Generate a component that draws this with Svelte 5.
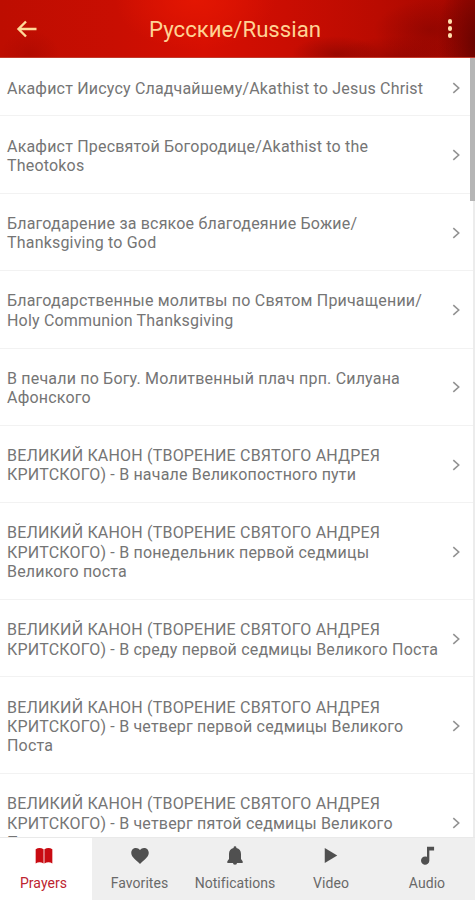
<script>
  const prayers = [
    ['Акафист Иисусу Сладчайшему/Akathist to Jesus Christ'],
    ['Акафист Пресвятой Богородице/Akathist to the', 'Theotokos'],
    ['Благодарение за всякое благодеяние Божие/', 'Thanksgiving to God'],
    ['Благодарственные молитвы по Святом Причащении/', 'Holy Communion Thanksgiving'],
    ['В печали по Богу. Молитвенный плач прп. Силуана', 'Афонского'],
    ['ВЕЛИКИЙ КАНОН (ТВОРЕНИЕ СВЯТОГО АНДРЕЯ', 'КРИТСКОГО) - В начале Великопостного пути'],
    ['ВЕЛИКИЙ КАНОН (ТВОРЕНИЕ СВЯТОГО АНДРЕЯ', 'КРИТСКОГО) - В понедельник первой седмицы', 'Великого поста'],
    ['ВЕЛИКИЙ КАНОН (ТВОРЕНИЕ СВЯТОГО АНДРЕЯ', 'КРИТСКОГО) - В среду первой седмицы Великого Поста'],
    ['ВЕЛИКИЙ КАНОН (ТВОРЕНИЕ СВЯТОГО АНДРЕЯ', 'КРИТСКОГО) - В четверг первой седмицы Великого', 'Поста'],
    ['ВЕЛИКИЙ КАНОН (ТВОРЕНИЕ СВЯТОГО АНДРЕЯ', 'КРИТСКОГО) - В четверг пятой седмицы Великого', 'Поста']
  ];
  const tabs = [
    { label: 'Prayers', d: 'M2 4Q6.5 0.8 11.5 4V21Q6.5 18 2 21ZM12.5 4Q17.5 0.8 22 4V21Q17.5 18 12.5 21Z' },
    { label: 'Favorites', d: 'M12 21.5l-1.45-1.32C5.1 15.5 1.5 12.3 1.5 8.2 1.5 5 4 2.5 7.2 2.5c1.9 0 3.6.9 4.8 2.3 1.2-1.4 2.9-2.3 4.8-2.3 3.2 0 5.7 2.5 5.7 5.7 0 4.1-3.6 7.3-9.05 12z' },
    { label: 'Notifications', d: 'M12 22.5a2.5 2.5 0 0 0 2.5-2.6h-5A2.5 2.5 0 0 0 12 22.5zm7.2-7V9.5c0-3.7-2-6.4-5.5-7.1V2a1.7 1.7 0 0 0-3.4 0v.4c-3.5.7-5.5 3.4-5.5 7.1V15.5L2.8 18.3V20.3h18.4v-2z' },
    { label: 'Video', d: 'M4.5 2.5L19.5 11.5 4.5 20.5z' },
    { label: 'Audio', d: 'M12 1v12a5 5 0 1 0 2.8 4.7V5.5h5.7V1z' }
  ];
</script>

<div class="screen">
  <header>
    <button aria-label="Back">
      <svg width="24" height="24" viewBox="0 0 24 24"><path d="M21.5 12H4M11 4.5L3.5 12l7.5 7.5" /></svg>
    </button>
    <h1>Русские/Russian</h1>
    <button class="more" aria-label="More"><i></i><i></i><i></i></button>
  </header>
  <main>
    {#each prayers as lines}
      <div class="row">
        <div class="name">
          {#each lines as line}<span>{line}</span>{/each}
        </div>
        <svg width="9" height="12" viewBox="0 0 9 12"><path d="M1.3 1.2L6.7 6L1.3 10.8" /></svg>
      </div>
    {/each}
    <div class="track"><div class="thumb"></div></div>
  </main>
  <nav>
    {#each tabs as tab, i}
      <div class="tab" class:active={i === 0}>
        <svg width="20" height="20" viewBox="0 0 24 24"><path d={tab.d} /></svg>
        <span>{tab.label}</span>
      </div>
    {/each}
  </nav>
</div>

<style>
  .screen {
    width: 475px;
    height: 900px;
    display: flex;
    flex-direction: column;
    overflow: hidden;
    background: #fff;
    font-family: Roboto, "Liberation Sans", sans-serif;
  }
  header {
    height: 58px;
    flex: none;
    box-sizing: border-box;
    border-bottom: 1px solid #c33a2c;
    display: flex;
    align-items: center;
    padding: 0 13px 0 15px;
    background:
      radial-gradient(ellipse 44px 18px at 336px 54px, #850600a0, transparent),
      radial-gradient(ellipse 56px 30px at 430px 30px, #7c040080, transparent),
      radial-gradient(ellipse 70px 22px at 400px 58px, #7c040080, transparent),
      radial-gradient(ellipse 40px 76px at 478px 40px, #650300, transparent),
      radial-gradient(ellipse 30px 24px at 30px 54px, #a8090090, transparent),
      radial-gradient(ellipse 80px 50px at 195px 0, #e31602, transparent),
      linear-gradient(90deg, #bd0d01 0, #c90e02 25%, #d60f02 43%, #ca0d02 60%, #b90b01 80%, #a20700 100%);
  }
  button {
    width: 24px;
    height: 24px;
    padding: 0;
    border: 0;
    background: none;
  }
  header svg {
    display: block;
    fill: none;
    stroke: #ffd998;
    stroke-width: 2.4;
  }
  h1 {
    flex: 1;
    margin: 0;
    padding-right: 7px;
    text-align: center;
    font-size: 22.2px;
    font-weight: 400;
    line-height: 28px;
    color: #ffd394;
  }
  .more {
    display: flex;
    flex-direction: column;
    align-items: center;
    justify-content: center;
    gap: 2.4px;
  }
  .more i {
    width: 4.6px;
    height: 4.6px;
    border-radius: 50%;
    background: #ffe0ad;
  }
  main {
    position: relative;
    height: 780px;
    flex: none;
    box-sizing: border-box;
    padding-top: 0.4px;
    overflow: hidden;
  }
  .row {
    display: flex;
    align-items: center;
    justify-content: space-between;
    box-sizing: border-box;
    padding: 20.15px 14.5px 17.55px 7px;
    border-bottom: 1px solid #f2f2f2;
  }
  .name span {
    display: block;
    white-space: nowrap;
    font-size: 16px;
    line-height: 19.35px;
    letter-spacing: 0.19px;
    color: #757575;
  }
  .row svg {
    flex: none;
    position: relative;
    top: -0.7px;
    fill: none;
    stroke: #929292;
    stroke-width: 1.6;
  }
  .track {
    position: absolute;
    top: 0;
    right: 0;
    width: 2px;
    height: 100%;
    background: #ececec;
  }
  .thumb {
    position: absolute;
    right: 0;
    width: 5px;
    height: 143px;
    background: #b5b5b5;
  }
  nav {
    flex: 1;
    display: grid;
    grid-template-columns: 92px 95px 96px 96px 96px;
    background: #efefef;
    box-shadow: 0 -1px #e9e9e9;
    position: relative;
  }
  .tab {
    display: flex;
    flex-direction: column;
    align-items: center;
    padding-top: 8px;
    gap: 8px;
    color: #696969;
    fill: #505050;
    font-size: 14px;
    line-height: 18px;
    letter-spacing: 0.05px;
  }
  .active {
    padding-right: 5px;
    background: #fff;
    color: #bd2430;
    fill: #c90b12;
  }
</style>
